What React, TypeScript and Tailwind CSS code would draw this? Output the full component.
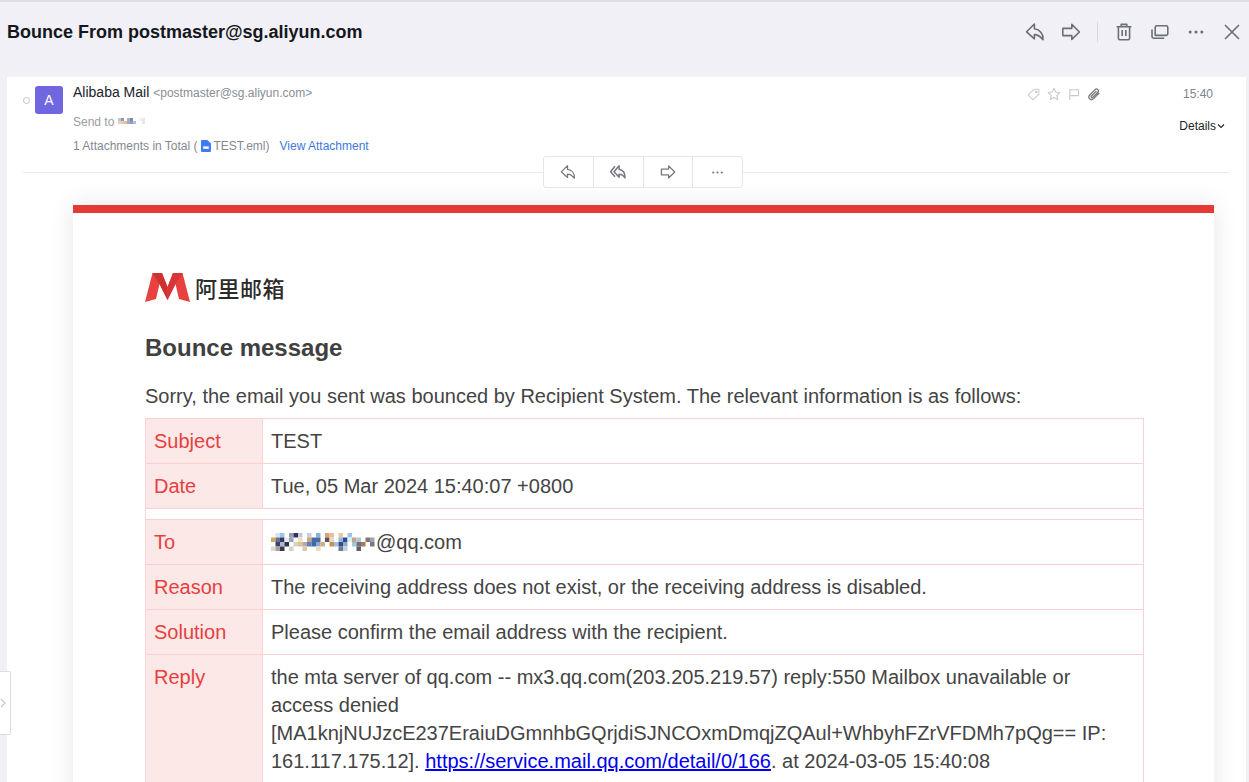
import React from "react";

const ReplyIcon = ({ size = 20 }: { size?: number }) => (
  <svg width={size} height={size} viewBox="0 0 20 20" fill="none" stroke="currentColor" strokeWidth="1.6" strokeLinejoin="round">
    <path d="M9.400 2 1.600 9.800l7.800 7v-4.200c2.800-.2 5 .9 8.600 5 .4-5.600-2.800-10-8.600-10.800V2Z" />
  </svg>
);

const ReplyAllIcon = () => (
  <svg width="18" height="18" viewBox="0 0 20 20" fill="none" stroke="currentColor" strokeWidth="1.7" strokeLinejoin="round">
    <path d="M11.200 3 5.600 9.800l5.600 6v-3.400c2.400-.2 4.400.8 6.600 4.200.2-5-2-8.600-6.600-9.600V3Z" />
    <path d="M6.600 3.600 1.800 9.800l4.800 5.400" />
  </svg>
);

const ForwardIcon = ({ size = 20 }: { size?: number }) => (
  <svg width={size} height={size} viewBox="0 0 20 20" fill="none" stroke="currentColor" strokeWidth="1.6" strokeLinejoin="round">
    <path d="M10.800 2.400 18.400 10l-7.600 7.400v-3.800H1.800V6.400h9V2.400Z" />
  </svg>
);

const DotsIcon = ({ size = 20 }: { size?: number }) => (
  <svg width={size} height={size} viewBox="0 0 20 20" fill="currentColor">
    <circle cx="3.500" cy="10" r="1.700" />
    <circle cx="10" cy="10" r="1.700" />
    <circle cx="16.500" cy="10" r="1.700" />
  </svg>
);

const Mosaic = ({ cells, size, width, height }: { cells: [number, number, string][]; size: number; width: number; height: number }) => (
  <svg width={width} height={height} viewBox={`0 0 ${width} ${height}`} className="shrink-0">
    {cells.map(([x, y, color], i) => (
      <rect key={i} x={x * size} y={y * size} width={size} height={size} fill={color} />
    ))}
  </svg>
);

const sendToCells: [number, number, string][] = [
  [0, 0, "#c3c7d4"], [1, 0, "#8f98b3"], [3, 0, "#aab0c4"], [4, 0, "#7f8aab"],
  [0, 1, "#d8d2cc"], [1, 1, "#f2c8a6"], [2, 1, "#e2bda4"], [3, 1, "#a0abc8"], [4, 1, "#8f9dca"], [5, 1, "#aebee0"],
  [7, 0, "#eef0f4"], [8, 0, "#e6e9ef"], [8, 1, "#e2e7ee"],
];

const toCells: [number, number, string][] = [
  [1, 0, "#dcdfe4"], [2, 0, "#9cc3ea"], [4, 0, "#9a9ca6"], [5, 0, "#2c3268"], [6, 0, "#c4c8dc"], [8, 0, "#c9ced8"], [10, 0, "#8fb0d8"], [12, 0, "#d9a070"], [13, 0, "#e0c0a0"], [15, 0, "#f0c890"], [17, 0, "#a0c4e0"],
  [0, 1, "#d9a860"], [1, 1, "#6a7090"], [2, 1, "#2f3a6a"], [3, 1, "#e6e8ee"], [4, 1, "#9aa0b8"], [6, 1, "#f2e4b0"], [8, 1, "#c8a878"], [9, 1, "#4a6aa8"], [10, 1, "#506a98"], [12, 1, "#5a5650"], [13, 1, "#e8d8c8"], [15, 1, "#8ab8e0"], [16, 1, "#2f4a90"], [17, 1, "#d8eef2"], [18, 1, "#c8a090"], [19, 1, "#b0c8d8"], [21, 1, "#8a7078"], [22, 1, "#a0a4b0"],
  [1, 2, "#3a4270"], [2, 2, "#b0b6c8"], [3, 2, "#2c3050"], [5, 2, "#d8d2c0"], [6, 2, "#e0c090"], [7, 2, "#a8acb8"], [8, 2, "#6a80a8"], [9, 2, "#3a6ab0"], [10, 2, "#8fa8d0"], [11, 2, "#d0b080"], [13, 2, "#c89058"], [14, 2, "#a0c0e0"], [15, 2, "#3a4a80"], [16, 2, "#90a8c8"], [18, 2, "#a0c8d8"], [19, 2, "#707078"], [20, 2, "#b07850"], [22, 2, "#70788c"],
  [0, 3, "#e0d8cc"], [1, 3, "#a0a0a8"], [2, 3, "#3a3a40"], [4, 3, "#d8d0c4"], [7, 3, "#dcc8a8"], [10, 3, "#e8dcc0"], [15, 3, "#6a78a0"], [16, 3, "#c8d0e0"], [19, 3, "#606068"],
];

const rows = [
  { label: "To", value: null },
  { label: "Reason", value: "The receiving address does not exist, or the receiving address is disabled." },
  { label: "Solution", value: "Please confirm the email address with the recipient." },
];

const cellLabel = "border border-[#f9d1d0] bg-[#fde8e8] text-[#e5403e] px-2 align-middle w-[117px]";
const cellValue = "border border-[#f9d1d0] px-2 align-middle";

export default function App() {
  return (
    <div className="relative h-[782px] w-[1249px] overflow-hidden bg-[#f0f0f6] font-['Liberation_Sans',Arial,sans-serif] border-t-2 border-[#dedee3]">
      <header className="flex h-[75px] items-start justify-between pl-[7px] pr-[7px]">
        <h1 className="mt-[18px] text-[18px] leading-[24px] font-bold text-[#14171c]">
          Bounce From postmaster@sg.aliyun.com
        </h1>
        <div className="mt-[20px] flex items-center text-[#6b6f78]">
          <ReplyIcon />
          <span className="ml-[16px]"><ForwardIcon /></span>
          <span className="ml-[16px] h-[20px] w-px bg-[#d9d9de]" />
          <span className="ml-[16px]">
            <svg width="20" height="20" viewBox="0 0 20 20" fill="none" stroke="currentColor" strokeWidth="1.6" strokeLinejoin="round">
              <path d="M2.600 4.800h14.800M7.200 4.600V2.400h5.600v2.200M4.400 4.800v11.400c0 1 .7 1.600 1.600 1.600h8c1 0 1.600-.6 1.600-1.600V4.800M8.200 8v6M11.800 8v6" />
            </svg>
          </span>
          <span className="ml-[16px]">
            <svg width="20" height="20" viewBox="0 0 20 20" fill="none" stroke="currentColor" strokeWidth="1.6" strokeLinejoin="round">
              <path d="M5.400 13.400h-.2V5.400c0-1 .6-1.600 1.600-1.600h9.400c1 0 1.600.6 1.600 1.600v6.400c0 1-.6 1.600-1.600 1.600H5.400Z" />
              <path d="M2 7.400v7.200c0 1 .6 1.600 1.600 1.600h10.600" />
            </svg>
          </span>
          <span className="ml-[17px]"><DotsIcon size={18} /></span>
          <span className="ml-[18px] mr-[1px]">
            <svg width="18" height="18" viewBox="0 0 18 18" fill="none" stroke="currentColor" strokeWidth="1.6">
              <path d="M2 2l14 14M16 2 2 16" />
            </svg>
          </span>
        </div>
      </header>

      <main className="ml-[7px] mr-[3px] h-[705px] overflow-hidden bg-white">
        <section className="relative mx-[16px] h-[96px] border-b border-[#ececef]">
          <div className="absolute left-[0px] top-[20px] h-[7px] w-[7px] rounded-full border border-[#c4c4c8]" />
          <div className="absolute left-[12px] top-[9px] flex h-[28px] w-[28px] items-center justify-center rounded-[3px] bg-[#6f66e0] text-[14px] text-white">
            A
          </div>
          <div className="pl-[50px]">
            <div className="flex items-baseline pt-[7px] leading-[17px]">
              <span className="text-[14px] text-[#20232a]">Alibaba Mail</span>
              <span className="ml-[4px] text-[12px] text-[#8a8d96]">&lt;postmaster@sg.aliyun.com&gt;</span>
            </div>
            <div className="mt-[13px] flex items-center gap-[4px] text-[12px] leading-[14px] text-[#9a9ca4]">
              Send to
              <Mosaic cells={sendToCells} size={3} width={27} height={9} />
            </div>
            <div className="mt-[10px] flex items-center text-[12px] leading-[14px] text-[#858892]">
              <span>1 Attachments in Total (</span>
              <svg width="10" height="12" viewBox="0 0 10 12" className="ml-[3px] mr-[3px]">
                <path d="M1 0h5.400L10 3.600V11a1 1 0 0 1-1 1H1a1 1 0 0 1-1-1V1a1 1 0 0 1 1-1Z" fill="#3f7cf2" />
                <rect x="2.200" y="6.400" width="5.600" height="2.400" fill="#fff" />
              </svg>
              <span>TEST.eml)</span>
              <span className="ml-[10px] text-[#3f78d8]">View Attachment</span>
            </div>
          </div>

          <div className="absolute right-[129px] top-[10px] flex items-center gap-[7px] text-[#c9c9ce]">
            <svg width="13" height="13" viewBox="0 0 14 14" fill="none" stroke="currentColor" strokeWidth="1.100" strokeLinejoin="round">
              <path d="M7.600 1.400h4.600a.6.6 0 0 1 .6.6v4.600L6.600 12.800 1.200 7.400Z" />
              <circle cx="10" cy="4.200" r="0.800" />
            </svg>
            <svg width="14" height="14" viewBox="0 0 14 14" fill="none" stroke="currentColor" strokeWidth="1.100" strokeLinejoin="round">
              <path d="m7 1.200 1.800 3.800 4 .5-3 2.800.8 4.100L7 10.400l-3.600 2 .8-4.100-3-2.800 4-.5Z" />
            </svg>
            <svg width="12" height="13" viewBox="0 0 13 14" fill="none" stroke="currentColor" strokeWidth="1.200">
              <path d="M2 13V1.800h9.400v6.400H2" />
            </svg>
            <span className="text-[#77797f]">
              <svg width="14" height="14" viewBox="0 0 14 14" fill="none" stroke="currentColor" strokeWidth="1.300" strokeLinecap="round">
                <path d="M11.800 6.200 6.600 11.600c-1.200 1.200-3 1.200-4 .2s-1-2.600.2-3.800L8 2.600c.8-.8 2-.8 2.800 0s.7 1.900 0 2.700L5.800 10.400c-.4.400-1 .4-1.400 0s-.3-1 .1-1.400L9 4.400" />
              </svg>
            </span>
          </div>
          <span className="absolute right-[17px] top-[10px] text-[12px] leading-[14px] text-[#7d8490]">15:40</span>
          <div className="absolute right-[5px] top-[42px] flex items-center text-[12px] leading-[14px] text-[#20232a]">
            Details
            <svg width="8" height="8" viewBox="0 0 8 8" fill="none" stroke="currentColor" strokeWidth="1.100" className="ml-[1px]">
              <path d="M1 2.500 4 5.500 7 2.500" />
            </svg>
          </div>

          <div className="absolute left-[520px] top-[79px] flex h-[32px] w-[200px] overflow-hidden rounded-[3px] border border-[#e6e6e9] bg-white text-[#77797f]">
            <div className="flex w-[50px] items-center justify-center border-r border-[#e6e6e9]"><ReplyIcon size={16} /></div>
            <div className="flex w-[50px] items-center justify-center border-r border-[#e6e6e9]"><ReplyAllIcon /></div>
            <div className="flex w-[50px] items-center justify-center border-r border-[#e6e6e9]"><ForwardIcon size={16} /></div>
            <div className="flex w-[49px] items-center justify-center"><DotsIcon size={13} /></div>
          </div>
        </section>

        <article className="ml-[66px] mt-[32px] w-[1141px] border-t-[8px] border-[#e53935] bg-white px-[72px] pt-[59px] pb-[60px] shadow-[0_0_24px_rgba(0,0,0,0.1)]">
          <div className="flex items-center">
            <svg width="45" height="30" viewBox="0 0 45 30">
              <path d="M7.500 1 0 30l11-3 3.500-15L22.500 28l8-16L34 27l11 3L37.500 1H28l-5.500 14L17 1Z" fill="#e94040" />
              <path d="M7.500 1H17l5.500 14v13L14.500 12Z" fill="#cf3030" />
              <path d="M37.500 1H28l-5.500 14v13l8-16Z" fill="#d83636" />
            </svg>
            <span className="ml-[5px] font-['Noto_Sans_CJK_SC',sans-serif] text-[22px] leading-[30px] font-medium tracking-[0.5px] text-[#2b2b2b]">
              阿里邮箱
            </span>
          </div>

          <h2 className="mt-[30px] text-[24px] leading-[32px] font-bold text-[#404040]">Bounce message</h2>

          <p className="mt-[18px] text-[20px] leading-[28px] text-[#444444]">
            Sorry, the email you sent was bounced by Recipient System. The relevant information is as follows:
          </p>

          <table className="mt-[8px] w-[999px] border-collapse text-[20px] leading-[28px] text-[#444444]">
            <tbody>
              <tr className="h-[45px]">
                <td className={cellLabel}>Subject</td>
                <td className={cellValue}>TEST</td>
              </tr>
              <tr className="h-[45px]">
                <td className={cellLabel}>Date</td>
                <td className={cellValue}>Tue, 05 Mar 2024 15:40:07 +0800</td>
              </tr>
              <tr className="h-[11px]">
                <td colSpan={2} className="border border-[#f9d1d0] p-0" />
              </tr>
              {rows.map((row) => (
                <tr key={row.label} className="h-[45px]">
                  <td className={cellLabel}>{row.label}</td>
                  <td className={cellValue}>
                    {row.value ?? (
                      <span className="flex items-center">
                        <Mosaic cells={toCells} size={4.500} width={105} height={18} />
                        @qq.com
                      </span>
                    )}
                  </td>
                </tr>
              ))}
              <tr>
                <td className={`${cellLabel} !align-top pt-[8px]`}>Reply</td>
                <td className={`${cellValue} pt-[8px] pb-[8px]`}>
                  the mta server of qq.com -- mx3.qq.com(203.205.219.57) reply:550 Mailbox unavailable or access denied
                  [MA1knjNUJzcE237EraiuDGmnhbGQrjdiSJNCOxmDmqjZQAul+WhbyhFZrVFDMh7pQg== IP: 161.117.175.12].{" "}
                  <a className="text-[#0000ee] underline">https://service.mail.qq.com/detail/0/166</a>. at 2024-03-05 15:40:08
                </td>
              </tr>
            </tbody>
          </table>
        </article>
      </main>

      <div className="absolute left-0 top-[669px] flex h-[64px] w-[11px] items-center rounded-r-[2px] border border-l-0 border-[#dcdcdf] bg-white text-[#c8c8cc]">
        <svg width="7" height="10" viewBox="0 0 7 10" fill="none" stroke="currentColor" strokeWidth="1.300">
          <path d="m1 1 4 4-4 4" />
        </svg>
      </div>
    </div>
  );
}
